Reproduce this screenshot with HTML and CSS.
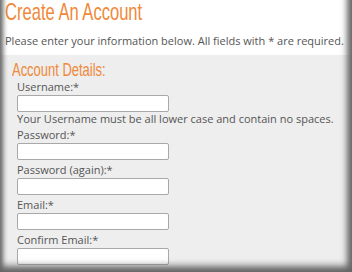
FILE: index.html
```html
<!DOCTYPE html>
<html lang="en">
<head>
    <meta charset="UTF-8">
    <meta name="viewport" content="width=device-width, initial-scale=1.0">
    <title>Create An Account</title>
    <link rel="stylesheet" href="styles.css">
</head>
<body>
    <div class="page">
        <div class="intro">
            <h1>Create An Account</h1>
            <p>Please enter your information below. All fields with * are required.</p>
        </div>
        <form class="details">
            <h2>Account Details:</h2>
            <label for="username">Username:*</label>
            <input type="text" id="username">
            <p class="hint">Your Username must be all lower case and contain no spaces.</p>
            <label for="password">Password:*</label>
            <input type="password" id="password">
            <label for="password2">Password (again):*</label>
            <input type="password" id="password2">
            <label for="email">Email:*</label>
            <input type="text" id="email">
            <label for="email2">Confirm Email:*</label>
            <input type="text" id="email2">
        </form>
    </div>
</body>
</html>
```

FILE: styles.css
```css
body {
    margin: 0;
    font-family: "Open Sans", "DejaVu Sans", sans-serif;
    color: #555;
    overflow: hidden;
}
.page {
    position: relative;
    height: 272px;
    overflow: hidden;
}
.page::after {
    content: "";
    position: absolute;
    left: 0;
    right: 0;
    top: -30px;
    bottom: 0;
    box-shadow: inset 5px 0 5px -2px #666, inset -7px 0 6px -2px #666, inset 0 -9px 7px -3px #666;
    pointer-events: none;
}
.intro {
    background-color: #fff;
    padding: 0 5px;
    height: 55px;
}
h1, h2 {
    margin: 0;
    display: inline-block;
    font-family: "Liberation Sans", Arial, sans-serif;
    font-weight: normal;
    color: #f0883a;
    transform-origin: left center;
}
h1 {
    font-size: 24px;
    line-height: 23px;
    transform: scaleX(0.69);
}
.intro p {
    margin: 9px 0 0;
    font-size: 11px;
    line-height: 14px;
}
.details {
    background-color: #eee;
    padding: 8px 0 0 17px;
    height: 217px;
    display: flex;
    flex-direction: column;
    align-items: flex-start;
}
h2 {
    margin-left: -5px;
    font-size: 18px;
    line-height: 14px;
    transform: scaleX(0.72);
}
label, .hint {
    font-size: 11px;
    margin: 0;
}
label {
    line-height: 13px;
    margin-top: 3px;
    margin-bottom: 2px;
}
input {
    width: 148px;
    height: 13px;
    padding: 1px;
    margin: 0;
    border: 1px solid #a8a8a8;
    border-radius: 2px;
    background-color: #fff;
}
.hint {
    line-height: 14px;
    margin-top: 0;
    margin-bottom: -1px;
}
```
